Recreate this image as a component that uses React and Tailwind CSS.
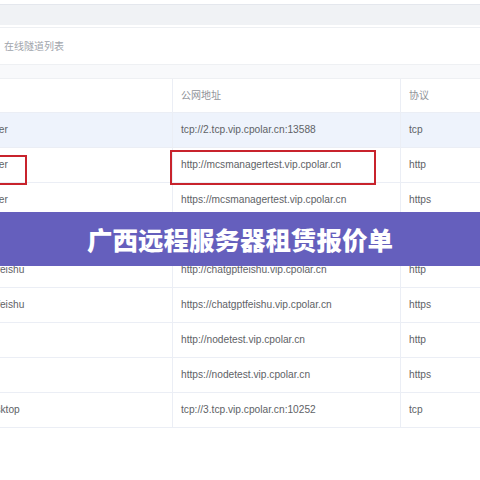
const rows = [
  { name: "mcsmanager", url: "tcp://2.tcp.vip.cpolar.cn:13588", proto: "tcp", active: true },
  { name: "mcsmanager", url: "http://mcsmanagertest.vip.cpolar.cn", proto: "http" },
  { name: "mcsmanager", url: "https://mcsmanagertest.vip.cpolar.cn", proto: "https" },
  { name: "ssh", url: "tcp://1.tcp.vip.cpolar.cn:20361", proto: "tcp" },
  { name: "ChatGPT_feishu", url: "http://chatgptfeishu.vip.cpolar.cn", proto: "http" },
  { name: "ChatGPT_feishu", url: "https://chatgptfeishu.vip.cpolar.cn", proto: "https" },
  { name: "nodetest", url: "http://nodetest.vip.cpolar.cn", proto: "http" },
  { name: "nodetest", url: "https://nodetest.vip.cpolar.cn", proto: "https" },
  { name: "remote-desktop", url: "tcp://3.tcp.vip.cpolar.cn:10252", proto: "tcp" },
];

function Cell({ children, last, className = "" }) {
  return (
    <div
      className={`flex items-center px-2 overflow-hidden whitespace-nowrap ${
        last ? "" : "border-r border-[#ebeef5]"
      } ${className}`}
    >
      {children}
    </div>
  );
}

export default function App() {
  return (
    <div
      className="relative w-[480px] h-[480px] overflow-hidden bg-white"
      style={{ fontFamily: '"Liberation Sans", Arial, "Noto Sans CJK SC", sans-serif' }}
    >
      {/* top bar */}
      <div className="h-[4px] bg-white" />
      <div className="h-[1px] bg-[#e4e7ed]" />
      <div className="h-[20px] bg-[#f0f2f5]" />
      <div className="h-[3px] bg-white border-b border-[#eef0f3]" />

      {/* card title */}
      <div className="h-[36px] bg-white flex items-center pl-1">
        <span className="text-[10px] text-[#a0a4ab]">在线隧道列表</span>
      </div>
      <div className="h-[15px] bg-[#f8f9fb] border-y border-[#eef0f3]" />

      {/* table */}
      <div className="-ml-[59px] w-[580px] text-[10.2px] text-[#606266]">
        <div className="grid grid-cols-[232px_228px_1fr] h-[34px] border-b border-[#ebeef5] text-[#909399] text-[10px]">
          <Cell>隧道名称</Cell>
          <Cell>公网地址</Cell>
          <Cell last>协议</Cell>
        </div>
        {rows.map((r, i) => (
          <div
            key={i}
            className={`grid grid-cols-[232px_228px_1fr] h-[35px] border-b border-[#ebeef5] ${
              r.active ? "bg-[#eef3fc]" : "bg-white"
            }`}
          >
            <Cell>{r.name}</Cell>
            <Cell>{r.url}</Cell>
            <Cell last>{r.proto}</Cell>
          </div>
        ))}
      </div>

      {/* red annotation boxes */}
      <div className="absolute left-[-10px] top-[155px] w-[37px] h-[30px] border-2 border-[#c8232c]" />
      <div className="absolute left-[170px] top-[150px] w-[206px] h-[35px] border-2 border-[#c8232c]" />

      {/* title banner */}
      <div className="absolute left-0 top-[212px] w-full h-[54px] bg-[#655fbd] flex items-center justify-center">
        <span
          className="text-white font-black text-[25.5px]"
          style={{ fontFamily: '"Noto Sans CJK SC", sans-serif' }}
        >
          广西远程服务器租赁报价单
        </span>
      </div>
    </div>
  );
}
